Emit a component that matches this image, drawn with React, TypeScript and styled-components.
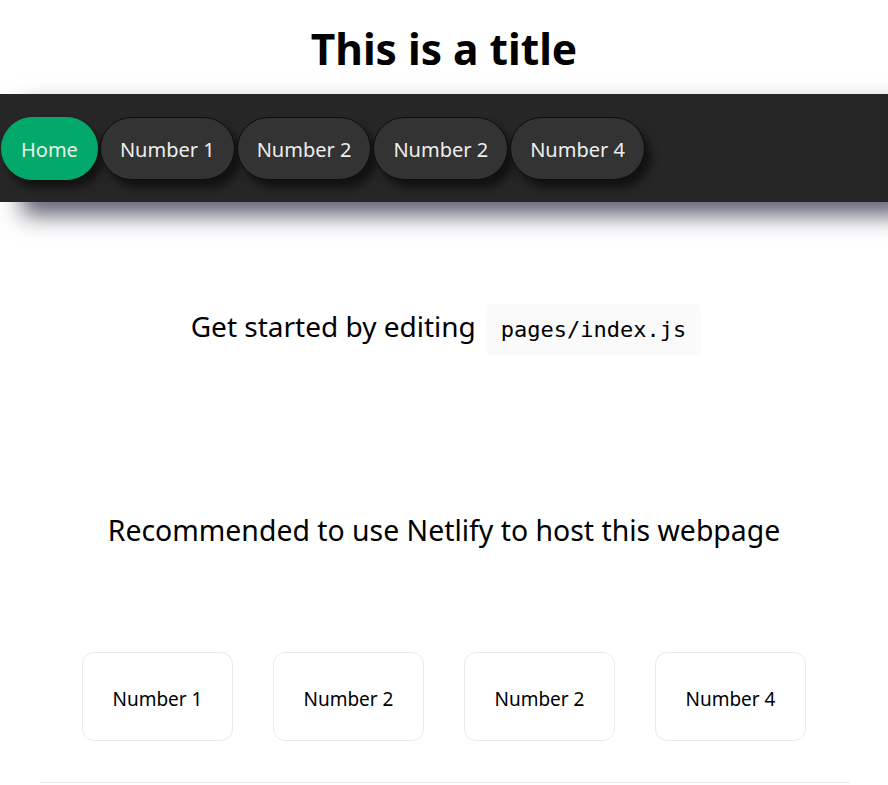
import React from "react"
import styled, { createGlobalStyle } from "styled-components"

const GlobalStyle = createGlobalStyle`
  html, body {
    margin: 0;
    padding: 0;
    background: #ffffff;
    font-family: "Noto Sans", "Open Sans", sans-serif;
    color: #000000;
  }
  * {
    box-sizing: border-box;
  }
`

const Page = styled.div`
  display: flex;
  flex-direction: column;
`

const Title = styled.h1`
  margin: 0;
  padding: 19px 0 15px;
  text-align: center;
  font-size: 42.5px;
  line-height: 60px;
  font-weight: 700;
`

const NavBar = styled.nav`
  display: flex;
  align-items: center;
  gap: 2px;
  height: 108px;
  padding: 0 0 0 1px;
  background: #262626;
  box-shadow: 22px 13px 22px #5f5f70;
`

const NavButton = styled.a<{ $active?: boolean }>`
  display: flex;
  align-items: center;
  justify-content: center;
  height: 63px;
  padding: 2px 19px 0;
  border-radius: 32px;
  border: 1px solid ${props => (props.$active ? "#03a96b" : "#0d0d0d")};
  background: ${props => (props.$active ? "#03a96b" : "#333333")};
  color: #eeeeee;
  font-size: 20px;
  box-shadow: 6px 8px 8px rgba(0, 0, 0, 0.55);
  cursor: pointer;
`

const Main = styled.main`
  display: flex;
  flex-direction: column;
  align-items: center;
  padding-top: 102px;
`

const Description = styled.p`
  display: flex;
  align-items: center;
  gap: 10px;
  margin: 0 0 0 4px;
  font-size: 28px;
  line-height: 40px;
`

const Lead = styled.span`
  padding-bottom: 8px;
`

const Code = styled.code`
  background: #fafafa;
  border-radius: 5px;
  padding: 0 15px;
  height: 51px;
  display: flex;
  align-items: center;
  font-family: "DejaVu Sans Mono", monospace;
  font-size: 22px;
`

const Recommend = styled.p`
  margin: 155px 0 0;
  font-size: 28.4px;
  line-height: 40px;
  text-align: center;
`

const Grid = styled.div`
  display: flex;
  gap: 40px;
  margin-top: 102px;
`

const Card = styled.div`
  display: flex;
  align-items: center;
  justify-content: center;
  width: 151px;
  height: 89px;
  padding-top: 5px;
  border: 1px solid #eaeaea;
  border-radius: 12px;
  font-size: 19px;
`

const Footer = styled.footer`
  margin: 41px 38px 0 40px;
  border-top: 1px solid #eaeaea;
  height: 20px;
`

const navItems = ["Home", "Number 1", "Number 2", "Number 2", "Number 4"]
const cards = ["Number 1", "Number 2", "Number 2", "Number 4"]

const App = () => {
  return (
    <Page>
      <GlobalStyle />
      <Title>This is a title</Title>
      <NavBar>
        {navItems.map((item, i) => (
          <NavButton key={i} $active={i === 0}>
            {item}
          </NavButton>
        ))}
      </NavBar>
      <Main>
        <Description>
          <Lead>Get started by editing</Lead>
          <Code>pages/index.js</Code>
        </Description>
        <Recommend>Recommended to use Netlify to host this webpage</Recommend>
        <Grid>
          {cards.map((card, i) => (
            <Card key={i}>{card}</Card>
          ))}
        </Grid>
      </Main>
      <Footer />
    </Page>
  )
}

export default App
